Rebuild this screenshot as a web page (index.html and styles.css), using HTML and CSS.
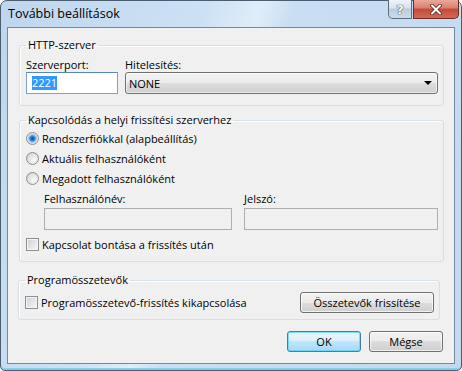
FILE: index.html
```html
<!DOCTYPE html>
<html lang="hu">

<head>
    <meta charset="UTF-8">
    <meta name="viewport" content="width=device-width, initial-scale=1.0">
    <title>További beállítások</title>
    <link rel="stylesheet" href="styles.css">
</head>

<body>
    <div class="window">
        <div class="titlebar">
            <span class="title">További beállítások</span>
            <div class="caption-buttons">
                <button class="cap-btn cap-help">?</button>
                <button class="cap-btn cap-close">
                    <svg width="12" height="11" viewBox="0 0 12 11">
                        <path d="M2 1.5 L10 9.5 M10 1.5 L2 9.5" stroke="#5a2020" stroke-width="3.6" stroke-linecap="round" />
                        <path d="M2 1.5 L10 9.5 M10 1.5 L2 9.5" stroke="#ffffff" stroke-width="2" stroke-linecap="round" />
                    </svg>
                </button>
            </div>
        </div>

        <div class="client">
            <fieldset class="group group-http">
                <legend>HTTP-szerver</legend>
                <div class="row">
                    <div class="field field-port">
                        <label>Szerverport:</label>
                        <div class="textbox focused"><span class="selected">2221</span></div>
                    </div>
                    <div class="field field-auth">
                        <label>Hitelesítés:</label>
                        <div class="combo">
                            <span>NONE</span>
                            <span class="arrow"></span>
                        </div>
                    </div>
                </div>
            </fieldset>

            <fieldset class="group group-connect">
                <legend>Kapcsolódás a helyi frissítési szerverhez</legend>
                <label class="option"><input type="radio" name="acc" class="radio" checked> Rendszerfiókkal (alapbeállítás)</label>
                <label class="option"><input type="radio" name="acc" class="radio"> Aktuális felhasználóként</label>
                <label class="option"><input type="radio" name="acc" class="radio"> Megadott felhasználóként</label>
                <div class="creds">
                    <div class="field field-user">
                        <label>Felhasználónév:</label>
                        <div class="textbox disabled"></div>
                    </div>
                    <div class="field field-pass">
                        <label>Jelszó:</label>
                        <div class="textbox disabled"></div>
                    </div>
                </div>
                <label class="option option-check"><input type="checkbox" class="check"> Kapcsolat bontása a frissítés után</label>
            </fieldset>

            <fieldset class="group group-components">
                <legend>Programösszetevők</legend>
                <div class="row row-components">
                    <label class="option"><input type="checkbox" class="check"> Programösszetevő-frissítés kikapcsolása</label>
                    <button class="btn btn-update">Összetevők frissítése</button>
                </div>
            </fieldset>

            <div class="dialog-buttons">
                <button class="btn btn-default">OK</button>
                <button class="btn">Mégse</button>
            </div>
        </div>
    </div>
</body>

</html>
```

FILE: styles.css
```css
* {
    box-sizing: border-box;
}

body {
    margin: 0;
    font-family: "Open Sans", "Liberation Sans", sans-serif;
    font-size: 11px;
    color: #000;
    background: #fff;
}

.window {
    width: 462px;
    height: 371px;
    border: 1px solid #4b5d70;
    border-radius: 7px 7px 5px 5px;
    background: linear-gradient(110deg, #bed6ee 0%, #cde1f4 35%, #dfedf9 44%, #c9def2 50%, #c2d9f0 100%);
    box-shadow: inset 0 -2px 0 #7fd0ef;
    padding: 0 6px 6px;
    display: flex;
    flex-direction: column;
}

/* title bar */

.titlebar {
    height: 26px;
    display: flex;
    justify-content: space-between;
    align-items: flex-start;
}

.title {
    font-size: 12.5px;
    line-height: 16px;
    margin: 5px 0 0 1px;
}

.caption-buttons {
    display: flex;
    gap: 1px;
    margin: -1px -4px 0 0;
}

.cap-btn {
    height: 19px;
    padding: 0;
    border: 1px solid #5c6c80;
    border-top: none;
    display: flex;
    justify-content: center;
    align-items: center;
}

.cap-help {
    width: 24px;
    border-radius: 0 0 0 5px;
    background: linear-gradient(#eef3f8, #d7e2ee 45%, #bccbdc 50%, #cfdbe8);
    font-family: "DejaVu Sans", sans-serif;
    font-size: 13px;
    font-weight: bold;
    color: #f4f7fa;
    text-shadow: 0 0 1px #4a5a70, 0 0 1px #4a5a70, 0 0 1px #4a5a70;
}

.cap-close {
    width: 46px;
    border-color: #6b2b26;
    border-radius: 0 0 5px 0;
    background: linear-gradient(#e9a99a, #d8806f 45%, #c24a3a 50%, #d36a52);
}

/* client area */

.client {
    flex: 1;
    border: 1px solid #75889c;
    background: #f0f0f0;
    display: flex;
    flex-direction: column;
}

.group {
    margin: 0 10px 0 11px;
    padding: 6px 5px 11px 6px;
    border: 1px solid #d5dfe5;
    border-radius: 3px;
    box-shadow: inset 1px 1px 0 #fff;
    min-width: 0;
}

.group legend {
    padding: 0 2px;
    line-height: 14px;
}

.group-http {
    margin-top: 10px;
}

.group-connect {
    margin-top: 7px;
    padding-top: 1px;
    padding-bottom: 7px;
}

.group-components {
    margin: 11px 14px 0 10px;
    padding-top: 5px;
    padding-bottom: 6px;
}

.row {
    display: flex;
    gap: 7px;
}

.field {
    display: flex;
    flex-direction: column;
}

.field label {
    line-height: 14px;
}

.field-port {
    width: 92px;
}

.field-auth {
    flex: 1;
}

.textbox {
    height: 22px;
    border: 1px solid #abadb3;
    border-top-color: #8e9297;
    background: #fff;
    display: flex;
    align-items: center;
    padding-left: 5px;
}

.textbox.focused {
    border-color: #7da2ce;
    border-top-color: #5b87bd;
}

.textbox.disabled {
    background: #f0f0f0;
    border-color: #afafaf;
    margin-top: 2px;
}

.selected {
    background: #3399ff;
    color: #fff;
    line-height: 14px;
}

.combo {
    height: 22px;
    border: 1px solid #707070;
    border-radius: 3px;
    background: linear-gradient(#f2f2f2, #ebebeb 50%, #dddddd 50%, #cfcfcf);
    box-shadow: inset 0 0 0 1px rgba(255, 255, 255, 0.6);
    display: flex;
    justify-content: space-between;
    align-items: center;
    padding: 0 5px 0 3px;
}

.arrow {
    width: 0;
    height: 0;
    border-left: 4px solid transparent;
    border-right: 4px solid transparent;
    border-top: 4px solid #000;
}

/* radios and checkboxes */

.option {
    display: flex;
    align-items: center;
    gap: 3px;
    height: 20px;
}

.radio,
.check {
    appearance: none;
    margin: 0;
    width: 13px;
    height: 13px;
    flex-shrink: 0;
}

.radio {
    border: 1px solid #8e8f8f;
    border-radius: 50%;
    background: radial-gradient(circle at 65% 65%, #fbfbfb, #dadada 70%);
}

.radio:checked {
    background: radial-gradient(circle at 50% 50%, #0d4c9c 0, #2a78cf 2px, #7ab8f2 3.5px, #c9ddf0 4.5px, #e3e8ee 5.5px);
}

.check {
    border: 1px solid #8e8f8f;
    background: linear-gradient(135deg, #cdd1d6, #f6f6f6);
    box-shadow: inset 0 0 0 1px #f4f4f4;
}

.creds {
    display: flex;
    gap: 12px;
    margin: 4px 0 0 18px;
}

.field-user {
    width: 188px;
}

.field-pass {
    flex: 1;
}

.option-check {
    margin-top: 4px;
}

.row-components {
    justify-content: space-between;
    align-items: center;
}

/* buttons */

.btn {
    height: 21px;
    padding: 0;
    border: 1px solid #707070;
    border-radius: 3px;
    background: linear-gradient(#f2f2f2, #ebebeb 50%, #dddddd 50%, #cfcfcf);
    box-shadow: inset 0 0 0 1px rgba(255, 255, 255, 0.7);
    font: inherit;
    color: #000;
}

.btn-update {
    width: 134px;
}

.dialog-buttons {
    display: flex;
    justify-content: flex-end;
    gap: 8px;
    margin: 11px 11px 0 0;
}

.dialog-buttons .btn {
    width: 74px;
}

.btn-default {
    border-color: #3c7fb1;
    background: linear-gradient(#eaf6fd, #d9f0fc 50%, #bee6fd 50%, #a7d9f5);
    box-shadow: inset 0 0 0 1px rgba(84, 210, 250, 0.7);
}
```
